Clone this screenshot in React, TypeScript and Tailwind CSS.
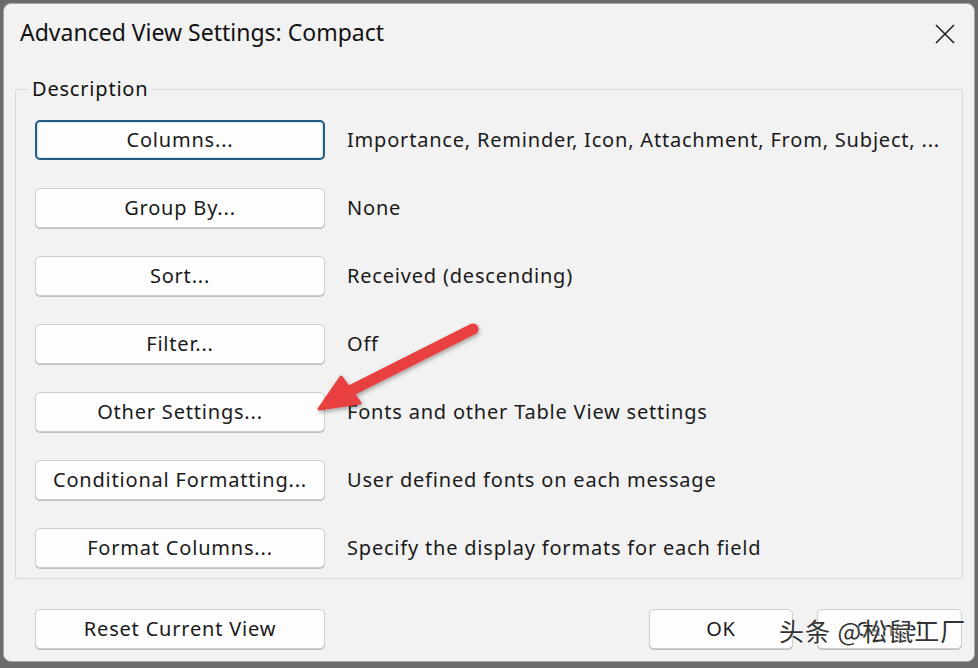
const rows = [
  { label: "Columns...", desc: "Importance, Reminder, Icon, Attachment, From, Subject, ...", focused: true },
  { label: "Group By...", desc: "None" },
  { label: "Sort...", desc: "Received (descending)" },
  { label: "Filter...", desc: "Off" },
  { label: "Other Settings...", desc: "Fonts and other Table View settings" },
  { label: "Conditional Formatting...", desc: "User defined fonts on each message" },
  { label: "Format Columns...", desc: "Specify the display formats for each field" },
]

function DlgButton({ label, focused, className }: { label: string; focused?: boolean; className?: string }) {
  return (
    <button
      className={
        "h-[40px] rounded-[5px] bg-[#fdfdfd] text-[20px] tracking-[0.8px] text-[#1a1a1a] " +
        (focused
          ? "border-2 border-[#245c82] shadow-[inset_0_0_0_1px_#cfe6f5] "
          : "border border-[#cfcfcf] shadow-[0_1px_0_#bdbdbd] ") +
        (className ?? "")
      }
    >
      {label}
    </button>
  )
}

export default function App() {
  return (
    <div className="w-[978px] h-[668px] bg-[#6b6b6b] pt-[3px] pl-[3px] font-['Noto_Sans',sans-serif]">
      <div className="relative flex h-[659px] w-[972px] flex-col rounded-[8px] bg-[#f2f2f2] border border-[#a8a8a8]">
        {/* title bar */}
        <div className="flex h-[56px] items-center justify-between pl-[16px] pr-[18px]">
          <span className="text-[23px] text-[#111]">Advanced View Settings: Compact</span>
          <svg width="22" height="22" viewBox="0 0 22 22" className="text-[#222] mt-[4px]">
            <path d="M2 2 L20 20 M20 2 L2 20" stroke="currentColor" strokeWidth="1.6" />
          </svg>
        </div>

        <fieldset className="mx-[11px] mt-[17px] border border-[#d8d8d8] rounded-[2px] pl-[19px] pr-[10px] pb-[10px]">
          <legend className="ml-[-7px] px-[4px] text-[20px] tracking-[0.8px] leading-[24px] text-[#111]">Description</legend>
          <div className="mt-[19px] flex flex-col gap-[28px]">
            {rows.map((r) => (
              <div key={r.label} className="flex items-center gap-[22px]">
                <DlgButton label={r.label} focused={r.focused} className="w-[290px]" />
                <span className="text-[20px] tracking-[0.8px] text-[#1a1a1a]">{r.desc}</span>
              </div>
            ))}
          </div>
        </fieldset>

        <div className="mt-[30px] flex items-center pl-[31px] pr-[12px]">
          <DlgButton label="Reset Current View" className="w-[290px]" />
          <div className="ml-auto flex gap-[24px]">
            <DlgButton label="OK" className="w-[144px]" />
            <DlgButton label="Cancel" className="w-[145px]" />
          </div>
        </div>

        {/* red annotation arrow */}
        <svg className="absolute left-[0px] top-[0px] pointer-events-none" width="972" height="659" viewBox="3 3 972 659">
          <defs>
            <filter id="sh" x="-20%" y="-20%" width="140%" height="140%">
              <feDropShadow dx="1" dy="2" stdDeviation="2" floodColor="#000" floodOpacity="0.35" />
            </filter>
          </defs>
          <g filter="url(#sh)">
            <line x1="472" y1="328" x2="345" y2="392" stroke="#e8413f" strokeWidth="11" strokeLinecap="round" />
            <path d="M318 408 L340 376 L359 402 Z" fill="#e8413f" stroke="#e8413f" strokeWidth="3" strokeLinejoin="round" />
          </g>
        </svg>

        {/* watermark */}
        <span className="absolute left-[775px] top-[611px] whitespace-nowrap text-[25px] leading-[30px] tracking-[1px] text-[#333] font-['Noto_Sans_CJK_SC',sans-serif] [text-shadow:0_0_2px_#fff,0_0_2px_#fff]">
          头条 @松鼠工厂
        </span>
      </div>
    </div>
  )
}
